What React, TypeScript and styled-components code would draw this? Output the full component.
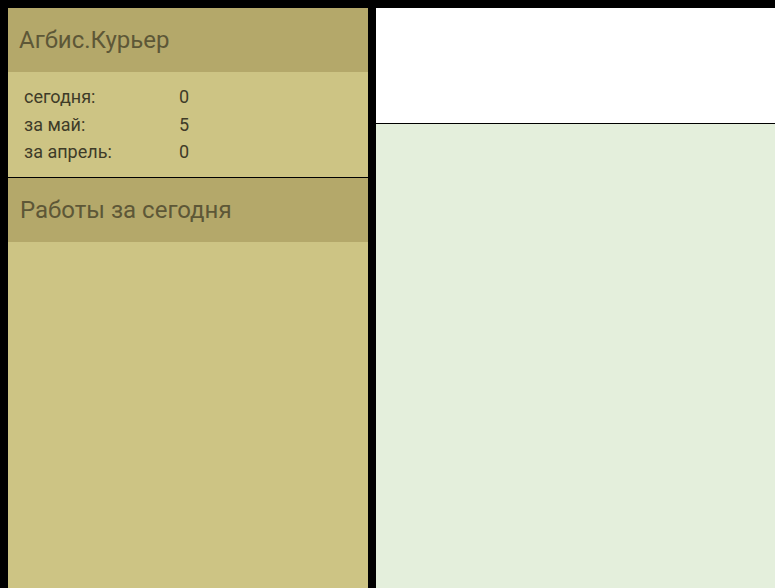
import React from "react";
import styled, { createGlobalStyle } from "styled-components";

const Global = createGlobalStyle`
  html, body { background: #000; }
  body { margin: 8px 0 0 8px; font-family: Roboto, "Noto Sans", sans-serif; overflow: hidden; }
`;

const Layout = styled.div`
  display: flex;
  gap: 8px;
  height: calc(100vh - 8px);
`;

const Sidebar = styled.aside`
  width: 360px;
  flex-shrink: 0;
  background: #cdc484;
  display: flex;
  flex-direction: column;
`;

const Header = styled.div<{ $indent: number }>`
  height: 64px;
  background: #b4a86a;
  display: flex;
  align-items: center;
  padding-left: ${(p) => p.$indent}px;
  font-size: 24px;
  color: #5d5737;
  flex-shrink: 0;
`;

const Stats = styled.div`
  padding: 11px 16px;
  border-bottom: 1px solid #000;
`;

const StatRow = styled.div`
  display: grid;
  grid-template-columns: 155px 1fr;
  height: 27.5px;
  align-items: center;
  font-size: 18px;
  color: #3e3b28;
`;

const Main = styled.main`
  flex: 1;
  display: flex;
  flex-direction: column;
`;

const Top = styled.div`
  height: 115px;
  background: #fff;
  border-bottom: 1px solid #000;
`;

const Content = styled.div`
  flex: 1;
  background: #e4efdc;
`;

const stats = [
  ["сегодня:", "0"],
  ["за май:", "5"],
  ["за апрель:", "0"],
];

export default function App() {
  return (
    <>
      <Global />
      <Layout>
        <Sidebar>
          <Header $indent={11}>Агбис.Курьер</Header>
          <Stats>
            {stats.map(([l, v]) => (
              <StatRow key={l}>
                <span>{l}</span>
                <span>{v}</span>
              </StatRow>
            ))}
          </Stats>
          <Header $indent={12}>Работы за сегодня</Header>
        </Sidebar>
        <Main>
          <Top />
          <Content />
        </Main>
      </Layout>
    </>
  );
}
